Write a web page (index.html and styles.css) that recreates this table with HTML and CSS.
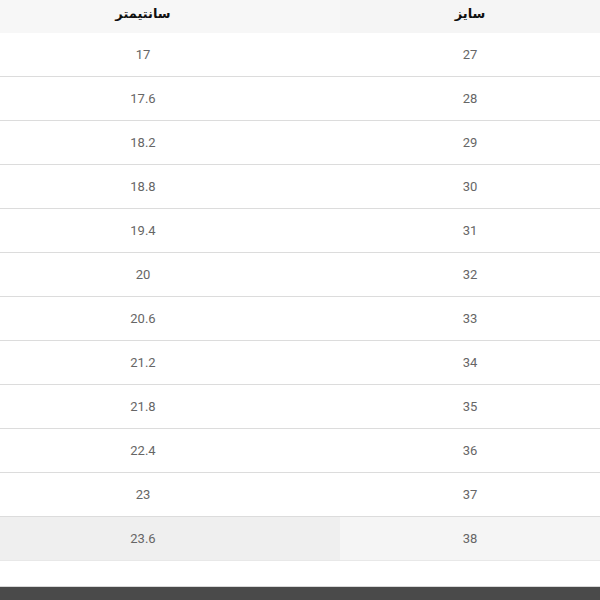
FILE: index.html
```html
<!DOCTYPE html>
<html lang="fa" dir="rtl">
<head>
<meta charset="utf-8">
<link rel="stylesheet" href="styles.css">
</head>
<body>
<div class="page">
  <table class="size-table">
    <thead>
      <tr><th class="c-size">سایز</th><th class="c-cm">سانتیمتر</th></tr>
    </thead>
    <tbody>
      <tr><td class="c-size">27</td><td class="c-cm">17</td></tr>
      <tr><td class="c-size">28</td><td class="c-cm">17.6</td></tr>
      <tr><td class="c-size">29</td><td class="c-cm">18.2</td></tr>
      <tr><td class="c-size">30</td><td class="c-cm">18.8</td></tr>
      <tr><td class="c-size">31</td><td class="c-cm">19.4</td></tr>
      <tr><td class="c-size">32</td><td class="c-cm">20</td></tr>
      <tr><td class="c-size">33</td><td class="c-cm">20.6</td></tr>
      <tr><td class="c-size">34</td><td class="c-cm">21.2</td></tr>
      <tr><td class="c-size">35</td><td class="c-cm">21.8</td></tr>
      <tr><td class="c-size">36</td><td class="c-cm">22.4</td></tr>
      <tr><td class="c-size">37</td><td class="c-cm">23</td></tr>
      <tr class="active"><td class="c-size">38</td><td class="c-cm">23.6</td></tr>
    </tbody>
  </table>
  <div class="spacer"></div>
  <div class="footer"></div>
</div>
</body>
</html>
```
FILE: styles.css
```css
html, body {
  margin: 0;
  padding: 0;
  background: #ffffff;
  overflow: hidden;
}
.page {
  width: 600px;
  height: 600px;
  display: flex;
  flex-direction: column;
}
.size-table {
  width: 600px;
  border-collapse: collapse;
  table-layout: fixed;
  font-family: Roboto, "DejaVu Sans", sans-serif;
}
.size-table th {
  height: 26px;
  padding: 0 0 7px 0;
  font-family: "DejaVu Sans", sans-serif;
  font-weight: bold;
  font-size: 13px;
  color: #111;
  background: #f5f5f5;
  vertical-align: middle;
  text-align: center;
}
.size-table th.c-cm {
  background: #f7f7f7;
}
.c-size {
  width: 260px;
}
.c-cm {
  padding-right: 54px !important;
}
.size-table td {
  height: 43px;
  padding: 0;
  font-size: 13px;
  color: #666;
  text-align: center;
  vertical-align: middle;
  border-bottom: 1px solid #dcdcdc;
}
.size-table tr.active td.c-size {
  background: #f5f5f5;
}
.size-table tr.active td.c-cm {
  background: #efefef;
}
.size-table tr.active td {
  border-bottom: 1px solid #e8e8e8;
}
.spacer {
  flex: 1;
}
.footer {
  height: 13px;
  background: #4a4a4a;
  border-top: 1px solid #d8d8d8;
}
```
